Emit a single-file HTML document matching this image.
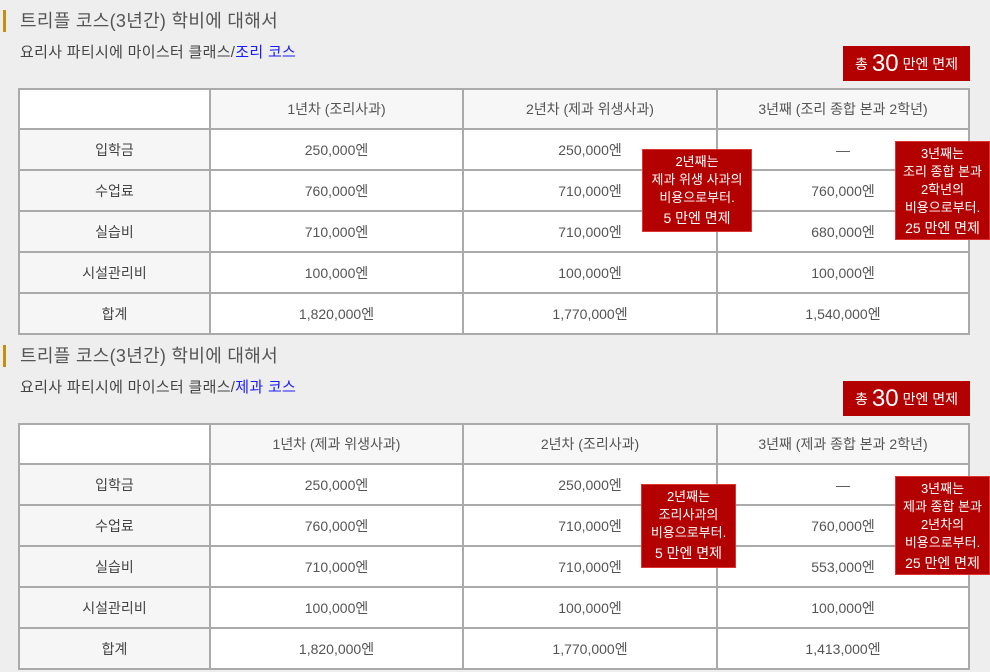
<!DOCTYPE html>
<html><head><meta charset="utf-8"><style>
*{margin:0;padding:0;box-sizing:border-box}
body{width:990px;height:672px;background:#eeeeee;font-family:"Liberation Sans","Noto Sans CJK KR",sans-serif;color:#555;position:relative;overflow:hidden}
.sec{position:absolute;left:0;width:990px;height:335px}
.bar{position:absolute;left:3px;top:10px;width:3px;height:22px;background:#c8900a}
.t{position:absolute;left:20px;top:7px;font-size:18px;color:#555;letter-spacing:0.3px}
.s{position:absolute;left:20px;top:41px;font-size:15px;color:#444;letter-spacing:0.3px}
.s b{font-weight:normal;color:#1a1aff}
.sum{position:absolute;left:843px;top:46px;width:127px;height:35px;background:#b30000;color:#fff;font-size:14px;text-align:center;line-height:35px}
.sum span{font-size:24px;vertical-align:-2px;margin:0 4px}
table{position:absolute;left:18px;top:88px;width:952px;border-collapse:collapse;font-size:14px}
td{border:2px solid #aaa;text-align:center;height:41px;background:#fff;color:#555}
tr:first-child td{height:40px;background:#f7f7f7}
tr:first-child td:first-child{background:#fff}
td:first-child{background:#f6f6f6;width:191px;color:#444}
.note{position:absolute;background:#b30000;color:#fff;font-size:13px;text-align:center;line-height:18px;padding-top:3px;border:1px solid #d33;white-space:nowrap}
.note .big{font-size:14px;line-height:22px}
</style></head><body>

<div class="sec" style="top:0">
<div class="bar"></div>
<div class="t">트리플 코스(3년간) 학비에 대해서</div>
<div class="s">요리사 파티시에 마이스터 클래스/<b>조리 코스</b></div>
<div class="sum">총<span>30</span>만엔 면제</div>
<table>
<tr><td></td><td style="width:253px">1년차 (조리사과)</td><td style="width:254px">2년차 (제과 위생사과)</td><td>3년째 (조리 종합 본과 2학년)</td></tr>
<tr><td>입학금</td><td>250,000엔</td><td>250,000엔</td><td>—</td></tr>
<tr><td>수업료</td><td>760,000엔</td><td>710,000엔</td><td>760,000엔</td></tr>
<tr><td>실습비</td><td>710,000엔</td><td>710,000엔</td><td>680,000엔</td></tr>
<tr><td>시설관리비</td><td>100,000엔</td><td>100,000엔</td><td>100,000엔</td></tr>
<tr><td>합계</td><td>1,820,000엔</td><td>1,770,000엔</td><td>1,540,000엔</td></tr>
</table>
<div class="note" style="left:642px;top:149px;width:110px;height:83px">2년째는<br>제과 위생 사과의<br>비용으로부터.<br><span class="big">5 만엔 면제</span></div>
<div class="note" style="left:895px;top:141px;width:95px;height:99px">3년째는<br>조리 종합 본과<br>2학년의<br>비용으로부터.<br><span class="big">25 만엔 면제</span></div>
</div>

<div class="sec" style="top:335px">
<div class="bar"></div>
<div class="t">트리플 코스(3년간) 학비에 대해서</div>
<div class="s">요리사 파티시에 마이스터 클래스/<b>제과 코스</b></div>
<div class="sum">총<span>30</span>만엔 면제</div>
<table>
<tr><td></td><td style="width:253px">1년차 (제과 위생사과)</td><td style="width:254px">2년차 (조리사과)</td><td>3년째 (제과 종합 본과 2학년)</td></tr>
<tr><td>입학금</td><td>250,000엔</td><td>250,000엔</td><td>—</td></tr>
<tr><td>수업료</td><td>760,000엔</td><td>710,000엔</td><td>760,000엔</td></tr>
<tr><td>실습비</td><td>710,000엔</td><td>710,000엔</td><td>553,000엔</td></tr>
<tr><td>시설관리비</td><td>100,000엔</td><td>100,000엔</td><td>100,000엔</td></tr>
<tr><td>합계</td><td>1,820,000엔</td><td>1,770,000엔</td><td>1,413,000엔</td></tr>
</table>
<div class="note" style="left:641px;top:149px;width:95px;height:84px">2년째는<br>조리사과의<br>비용으로부터.<br><span class="big">5 만엔 면제</span></div>
<div class="note" style="left:895px;top:141px;width:95px;height:99px">3년째는<br>제과 종합 본과<br>2년차의<br>비용으로부터.<br><span class="big">25 만엔 면제</span></div>
</div>

</body></html>
